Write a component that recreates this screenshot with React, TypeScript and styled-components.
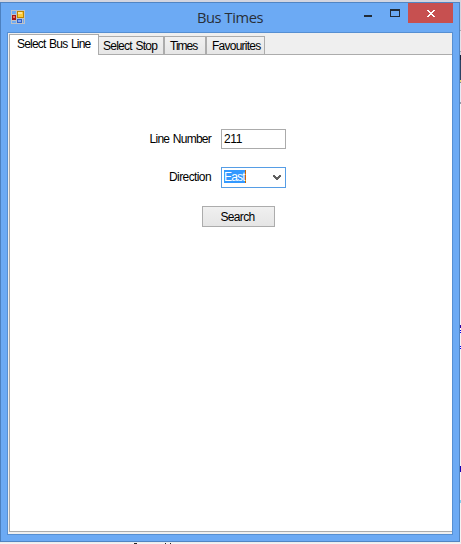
import React from "react";
import styled, { createGlobalStyle } from "styled-components";

const GlobalStyle = createGlobalStyle`
  * { box-sizing: border-box; }
  html, body, #root { margin: 0; width: 461px; height: 544px; overflow: hidden; }
  body { background: #fff; font-family: "Liberation Sans", Arial, sans-serif; font-size: 12px; color: #000; }
`;

const Desktop = styled.div`
  width: 461px;
  height: 544px;
  display: grid;
  grid-template-columns: 460px 1px;
  grid-template-rows: 2px 540px 2px;
  background: #f3f3f4;
`;

const TopEdge = styled.div`
  grid-column: 1 / 3;
  background: #d3d5e0;
`;

const RightEdge = styled.div`
  background: linear-gradient(
    #d3d5e0 0 28px, #a6a8b0 28px 29px, #e2e3ea 29px 49px, #a6a8b0 49px 50px,
    #d3d5e0 50px 53px, #14213c 53px 58px, #2b4263 58px 78px, #e8df77 78px 80px,
    #7b8593 80px 81px, #e6ebf5 81px 100px, #929baa 100px 102px, #f5f6f8 102px 323px,
    #2a00a5 323px 326px, #fff 326px 328px, #0000ee 328px 329px, #fff 329px 330px,
    #0000ee 330px 331px, #f4f4f4 331px 344px, #0000ee 344px 345px, #fff 345px 346px,
    #0000ee 346px 347px, #f4f4f4 347px 464px, #1700b7 464px 470px, #f4f4f4 470px 498px,
    #81d0ef 498px 501px, #f4f4f4 501px
  );
`;

const BottomEdge = styled.div`
  grid-column: 1 / 3;
  display: flex;
  background: linear-gradient(#e8e8e9, #f7f7f7);
`;

const Window = styled.div`
  width: 460px;
  height: 540px;
  display: flex;
  flex-direction: column;
  background: #6caaf4;
  border: 1px solid #5185c3;
  border-left-color: #4c80bf;
  padding: 0 6px 6px;
`;

const TitleBar = styled.div`
  height: 29px;
  flex: none;
  display: grid;
  grid-template-columns: 137px 172px 1fr;
`;

const AppIcon = styled.svg`
  margin: 7px 0 0 4px;
  display: block;
`;

const Title = styled.div`
  font: 14.7px/29px "Open Sans", sans-serif;
  color: #282f38;
  text-align: center;
  letter-spacing: -0.44px;
  height: 29px;
  white-space: nowrap;
`;

const Controls = styled.div`
  display: flex;
  justify-content: flex-end;
  height: 20px;
`;

const ControlButton = styled.button<{ $danger?: boolean; $width: number }>`
  width: ${p => p.$width}px;
  height: 20px;
  padding: 0;
  border: 0;
  background: ${p => (p.$danger ? "#c75050" : "transparent")};
  svg { display: block; }
`;

const Client = styled.div`
  flex: 1;
  display: flex;
  flex-direction: column;
  border: 1px solid #568fd2;
  background: #efefef;
  padding: 1px 0 2px 1px;
`;

const TabList = styled.div`
  height: 20px;
  flex: none;
  display: flex;
  align-items: flex-end;
`;

const Tab = styled.div<{ $active?: boolean; $divided?: boolean; $width: number; $spacing: number; $indent: number }>`
  width: ${p => p.$width}px;
  height: ${p => (p.$active ? 21 : 18)}px;
  margin-bottom: ${p => (p.$active ? -1 : 0)}px;
  z-index: ${p => (p.$active ? 1 : 0)};
  position: relative;
  border: 1px solid #acacac;
  border-left-width: ${p => (p.$active || p.$divided ? 1 : 0)}px;
  border-bottom: 0;
  background: ${p => (p.$active ? "#fff" : "linear-gradient(#f1f1f1, #e6e6e6)")};
  padding-left: ${p => p.$indent}px;
  line-height: 18px;
  letter-spacing: ${p => p.$spacing}px;
  word-spacing: 1px;
  white-space: nowrap;
`;

const Page = styled.div`
  flex: 1;
  border: 1px solid #acacac;
  border-right: 0;
  background: #fff;
  padding: 74px 0 0 111px;
`;

const Field = styled.div<{ $gap: number }>`
  display: grid;
  grid-template-columns: 90px 65px;
  column-gap: 10px;
  align-items: center;
  margin-bottom: ${p => p.$gap}px;
`;

const Label = styled.label<{ $spacing: number }>`
  text-align: right;
  letter-spacing: ${p => p.$spacing}px;
  word-spacing: 1px;
  line-height: 14px;
  padding-bottom: 1px;
  white-space: nowrap;
`;

const NumberBox = styled.div`
  height: 20px;
  border: 1px solid #ababab;
  padding-left: 2px;
  line-height: 18px;
  letter-spacing: -0.3px;
`;

const ComboBox = styled.div`
  height: 21px;
  border: 1px solid #569de5;
  display: flex;
  justify-content: space-between;
  padding: 2px 4px 0 2px;
`;

const Selection = styled.span`
  width: 22px;
  height: 13px;
  line-height: 14px;
  letter-spacing: -0.8px;
  background: #3399ff;
  color: #fff;
  border-right: 1px solid #cc6600;
  white-space: nowrap;
`;

const SearchButton = styled.button`
  display: block;
  width: 73px;
  height: 21px;
  margin-left: 81px;
  padding: 1px 2px 0 0;
  border: 1px solid #acacac;
  background: linear-gradient(#f0f0f0, #e5e5e5);
  font: 12px/18px "Liberation Sans", Arial, sans-serif;
  letter-spacing: -0.65px;
  color: #000;
`;

const tabs = [
  { label: "Select Bus Line", width: 90, spacing: -0.8, indent: 7, active: true },
  { label: "Select Stop", width: 65, spacing: -0.75, indent: 4 },
  { label: "Times", width: 42, spacing: -1, indent: 5, divided: true },
  { label: "Favourites", width: 59, spacing: -0.75, indent: 5, divided: true },
];

export default function App() {
  return (
    <>
      <GlobalStyle />
      <Desktop>
        <TopEdge />
        <Window>
          <TitleBar>
            <AppIcon width="14" height="14" viewBox="0 0 14 14" shapeRendering="crispEdges">
              <path d="M0 0h14v14H0z" fill="#bec2c8" />
              <path d="M1 1h4v3H1zM1 11h4v2H1zM12 9h1v4h-1z" fill="#6caaf4" />
              <path d="M1 5h4v5H1z" fill="#a31717" />
              <path d="M2 6h2v2H2z" fill="#ef6b57" />
              <path d="M6 1h7v7H6z" fill="#bd8500" />
              <path d="M7 2h5v5H7z" fill="#ffcc39" />
              <path d="M7 2h4v2H7z" fill="#ffe493" />
              <path d="M6 9h5v4H6z" fill="#315fc5" />
              <path d="M7 10h3v2H7z" fill="#7ba7f8" />
            </AppIcon>
            <Title>Bus Times</Title>
            <Controls>
              <ControlButton $width={27} aria-label="Minimize">
                <svg width="27" height="20" shapeRendering="crispEdges"><path d="M4 12h8v2H4z" fill="#222b36" /></svg>
              </ControlButton>
              <ControlButton $width={21} aria-label="Maximize">
                <svg width="21" height="20" shapeRendering="crispEdges"><path d="M3 6h10v8H3zM4 8v5h8V8z" fill="#222b36" fillRule="evenodd" /></svg>
              </ControlButton>
              <ControlButton $width={45} $danger aria-label="Close">
                <svg width="45" height="20" shapeRendering="crispEdges"><path d="M19 7h2v1h1v1h2V8h1V7h2v1h-1v1h-1v1h-1v1h1v1h1v1h1v1h-2v-1h-1v-1h-2v1h-1v1h-2v-1h1v-1h1v-1h1v-1h-1V9h-1V8h-1z" fill="#fff" /></svg>
              </ControlButton>
            </Controls>
          </TitleBar>
          <Client>
            <TabList>
              {tabs.map(t => (
                <Tab key={t.label} $active={t.active} $divided={t.divided} $width={t.width} $spacing={t.spacing} $indent={t.indent}>
                  {t.label}
                </Tab>
              ))}
            </TabList>
            <Page>
              <Field $gap={18}>
                <Label $spacing={-0.75}>Line Number</Label>
                <NumberBox>211</NumberBox>
              </Field>
              <Field $gap={18}>
                <Label $spacing={-0.6}>Direction</Label>
                <ComboBox>
                  <Selection>East</Selection>
                  <svg width="8" height="15" shapeRendering="crispEdges"><path d="M0 5h2v1h1v1h2V6h1V5h2v2H7v1H6v1H5v1H3V9H2V8H1V7H0z" fill="#606060" /></svg>
                </ComboBox>
              </Field>
              <SearchButton>Search</SearchButton>
            </Page>
          </Client>
        </Window>
        <RightEdge />
        <BottomEdge>
          <svg width="461" height="2" shapeRendering="crispEdges">
            <path d="M134 1.5h3M165 1.5h1M170 1.5h1" stroke="#252525" />
          </svg>
        </BottomEdge>
      </Desktop>
    </>
  );
}
